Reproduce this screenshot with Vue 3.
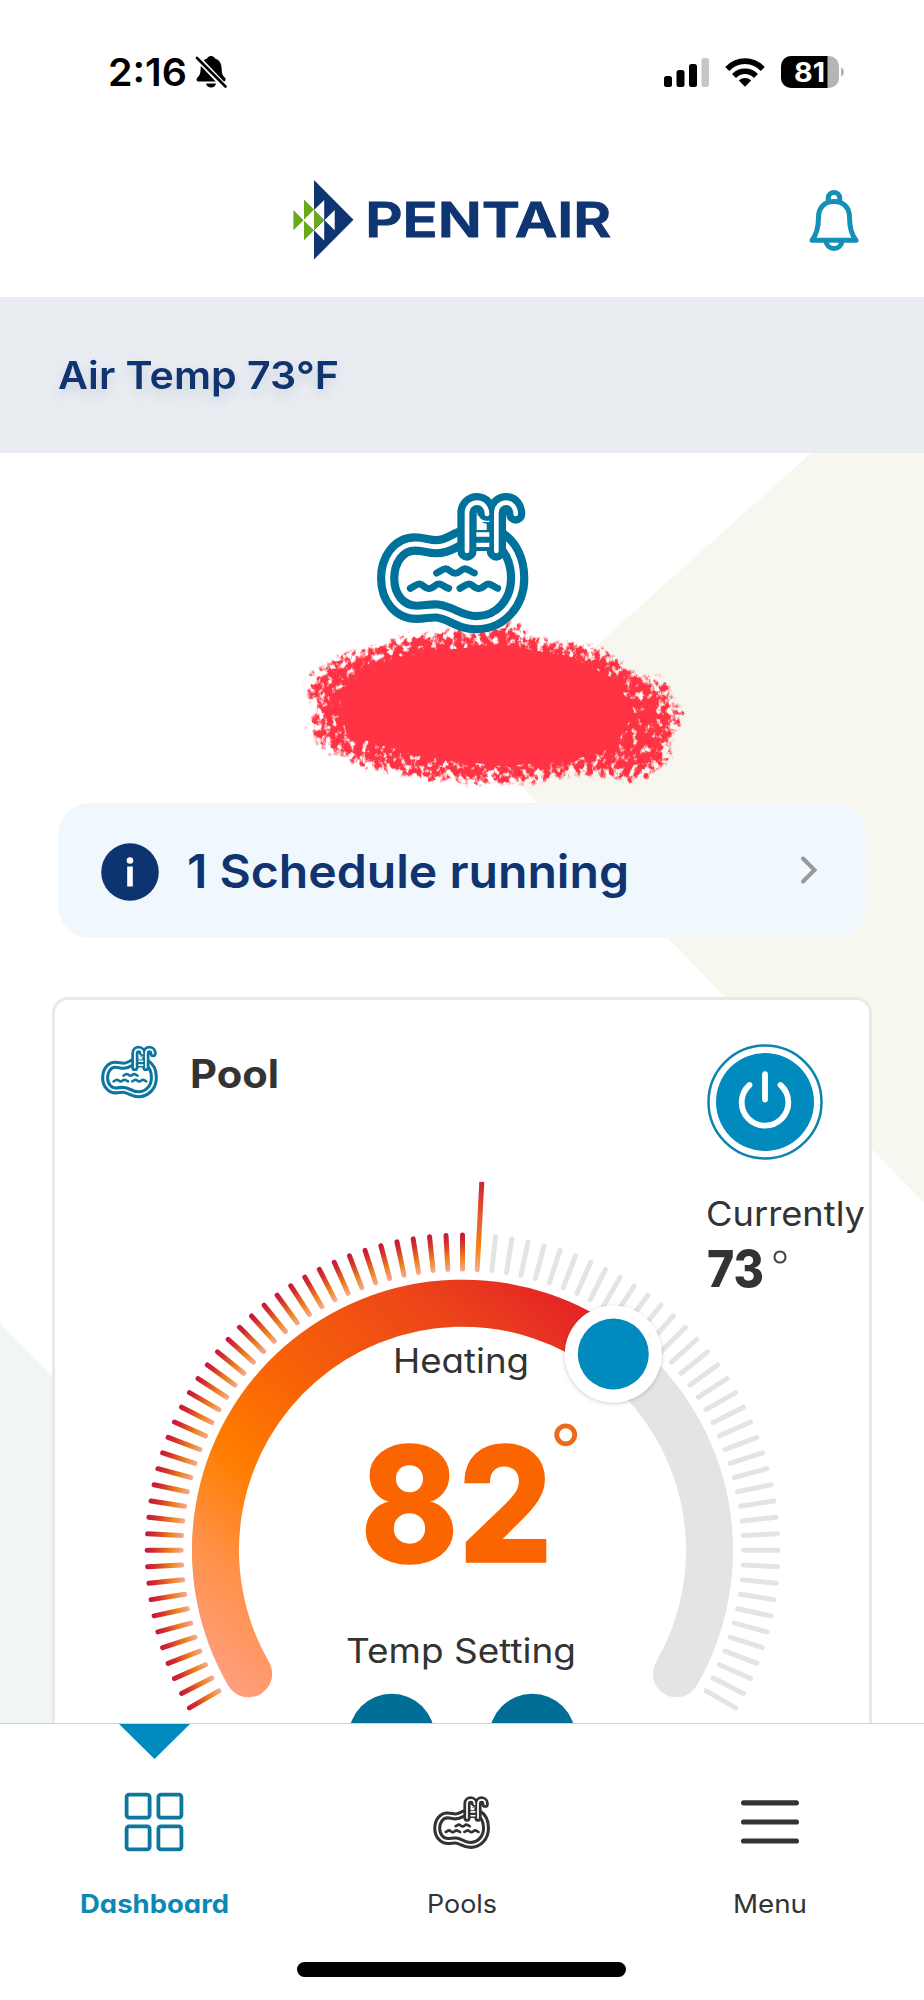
<script setup>
import { h } from 'vue'

// A single line of text whose box is exactly its cap height and whose width is fixed.
const Label = (props) =>
  h('svg', { class: 'label', width: props.w, height: Math.round(props.size * 0.727) }, [
    h('text', {
      x: 0,
      y: Math.round(props.size * 0.727),
      'font-size': props.size,
      'font-weight': props.weight,
      fill: 'currentColor',
      textLength: props.w,
      lengthAdjust: 'spacingAndGlyphs'
    }, props.text)
  ])
Label.props = ['text', 'w', 'size', 'weight']

const ticks = Array.from({ length: 81 }, (_, i) => -120 + i * 3)
  .filter((a) => a !== 3)
  .map((a) => ({ angle: a, hot: a < 3 }))
</script>

<template>
  <div class="screen">
    <svg class="defs" width="0" height="0">
      <symbol id="pool" viewBox="0 0 600 540">
        <path d="M345 200C315 206 300 230 258 230C235 230 220 222 195 222C145 222 113 270 113 325C113 385 150 427 200 427C225 427 240 421 262 423C308 429 325 458 380 458C450 458 503 400 503 325C503 270 480 225 445 205" fill="#fff" stroke="currentColor" stroke-width="64" />
        <path d="M345 200C315 206 300 230 258 230C235 230 220 222 195 222C145 222 113 270 113 325C113 385 150 427 200 427C225 427 240 421 262 423C308 429 325 458 380 458C450 458 503 400 503 325C503 270 480 225 445 205" fill="none" stroke="#fff" stroke-width="15" />
        <path d="M351 180H439V243H351Z" fill="currentColor" />
        <g fill="none" stroke-linecap="round">
          <path d="M351 243V130C351 110 365 98 381 98C399 98 411 113 411 132M439 243V130C439 110 453 98 468 98C486 98 497 113 497 132" stroke="currentColor" stroke-width="58" />
          <path d="M351 243V130C351 110 365 98 381 98C399 98 411 113 411 132M439 243V130C439 110 453 98 468 98C486 98 497 113 497 132" stroke="#fff" stroke-width="14" />
          <path d="M260 309C275 301 279 296 287 296C298 296 303 310 316 310C329 310 334 296 345 296C355 296 362 305 373 309M181 355C196 347 200 342 208 342C219 342 224 356 237 356C250 356 255 342 266 342C276 342 283 351 296 355M330 355C345 347 349 342 357 342C368 342 373 356 386 356C399 356 404 342 415 342C425 342 432 351 443 355" stroke="currentColor" stroke-width="21" />
        </g>
        <path d="M382 136V156H418V152C400 153 390 148 387 138ZM379 187H418V200H379ZM379 218H418V231H379Z" fill="#fff" />
      </symbol>
    </svg>

    <div class="status">
      <Label text="2:16" :w="79" :size="38.5" :weight="600" />
      <svg class="silent" width="32" height="34" viewBox="0 0 32 34">
        <path d="M16 1c2 0 3.500 1 4 2.600C25 5 26.500 9.500 26.700 14c.2 5 1 6.500 3 8.500 1.500 1.500 1 4-1 4H3.500c-2 0-2.500-2.500-1-4C5 20 5.500 18 5.600 14 6 8 8 5 12.200 3.600 12.600 2 14 1 16 1ZM11 28.500h10c-.5 2.500-2.500 4-5 4s-4.500-1.500-5-4Z" />
        <path d="M1 1.500 31 33" stroke="#fff" stroke-width="6" />
        <path d="M2 3 30.500 31.500" stroke="#000" stroke-width="2.600" stroke-linecap="round" />
      </svg>
      <svg class="signal" width="46" height="29" viewBox="0 0 46 29">
        <rect x="0" y="18" width="8" height="11" rx="2.500" />
        <rect x="12.500" y="12" width="8" height="17" rx="2.500" />
        <rect x="25" y="6" width="8" height="23" rx="2.500" />
        <rect x="37.500" y="0" width="7.500" height="29" rx="2.500" fill="#c6c6c6" />
      </svg>
      <svg class="wifi" width="40" height="29" viewBox="0 0 40 29">
        <g fill="none" stroke="#000" stroke-width="5.600">
          <path d="M2.300 11C12 .5 28 .5 37.700 11" />
          <path d="M9 17.900c6.300-6.200 15.700-6.200 22 0" />
        </g>
        <path d="M13.800 22.500c3.500-3.300 8.900-3.300 12.400 0L20 28.700Z" />
      </svg>
      <svg class="battery" width="64" height="32" viewBox="0 0 64 32">
        <clipPath id="cell"><rect width="58" height="32" rx="10" /></clipPath>
        <g clip-path="url(#cell)">
          <rect width="58" height="32" fill="#b5b5b5" />
          <rect width="46.500" height="32" />
        </g>
        <path d="M60 11.500c4 1.500 4 7.500 0 9Z" fill="#b5b5b5" />
        <text x="13" y="25.500" font-size="26.500" font-weight="700" fill="#fff" textLength="31" lengthAdjust="spacingAndGlyphs">81</text>
      </svg>
    </div>

    <header class="header">
      <svg class="brand" width="322" height="82" viewBox="0 0 322 82">
        <path d="M22 1 61.500 40.700 22 80.500Z" fill="#0f3572" />
        <path d="M32.200 21v20.200L22 31ZM32.200 41.200v20.200L22 51.200ZM42.700 31v20.200L32.500 41.200Z" fill="#fff" />
        <path d="M1.400 31v20.200l10.200-10ZM12 20.500v20.200L22 30.600ZM12 41.700v19.500l10-10ZM22 31v20.200l10.200-10Z" fill="#69a91b" />
        <text x="73.200" y="58.200" font-size="47.500" font-weight="600" fill="#0f3572" stroke="#0f3572" stroke-width="1" textLength="246" lengthAdjust="spacingAndGlyphs">PENTAIR</text>
      </svg>
      <svg class="bell" width="50" height="62" viewBox="0 0 50 62" fill="none" stroke="#138fb8" stroke-width="5" stroke-linejoin="round">
        <path d="M3 51.300C8 45 9.500 37 9.500 28C9.500 17.500 16.500 12.500 25 12.500S40.500 17.500 40.500 28C40.500 37 42 45 47 51.300Z" />
        <path d="M19.300 13V9C19.300 1.800 30.700 1.800 30.700 9V13M17 52C18 62 32 62 33 52" />
      </svg>
    </header>

    <section class="air">
      <Label text="Air Temp 73°F" :w="281" :size="38.5" :weight="600" />
    </section>

    <main class="content">
      <svg class="backdrop" width="924" height="1270" viewBox="0 453 924 1270">
        <path d="M811 453H924V1203L492 756Q483 747 492 739Z" fill="#f7f7ef" />
        <path d="M0 1323 60 1385V1723H0Z" fill="#f0f6f2" />
      </svg>

      <div class="hero">
        <svg class="scribble" width="440" height="190" viewBox="280 605 440 190">
          <filter id="crayon" x="-5%" y="-8%" width="110%" height="116%" color-interpolation-filters="sRGB">
            <feTurbulence type="fractalNoise" baseFrequency=".16 .13" numOctaves="4" seed="8" result="n" />
            <feColorMatrix in="n" values="0 0 0 0 1  0 0 0 0 .2  0 0 0 0 .26  1 0 0 0 0" result="grain" />
            <feTurbulence type="fractalNoise" baseFrequency=".05" numOctaves="2" seed="3" result="w" />
            <feDisplacementMap in="SourceGraphic" in2="w" scale="10" xChannelSelector="R" yChannelSelector="G" result="rough" />
            <feGaussianBlur in="rough" stdDeviation="11" result="soft" />
            <feComposite in="soft" in2="grain" operator="arithmetic" k2="1.1" k3="2.2" k4="-1.62" result="mix" />
            <feComponentTransfer in="mix" result="edge"><feFuncA type="linear" slope="2.3" intercept="0" /></feComponentTransfer>
            <feGaussianBlur in="rough" stdDeviation="1.5" result="outline" />
            <feComposite in="edge" in2="outline" operator="in" result="mask" />
            <feFlood flood-color="#ff3344" />
            <feComposite in2="mask" operator="in" />
          </filter>
          <path filter="url(#crayon)" d="M308 673 341 654 376 648 393 636 450 628 478 630 516 620 546 641 582 643 622 658 631 673 665 677 670 696 689 715 672 734 669 764 642 783 574 774 543 784 455 784 378 774 324 753 306 730 317 710 305 688Z" fill="#ff3344" />
          <path d="M343 695 372 669 420 657 500 648 570 661 612 682 630 712 612 744 570 757 500 762 420 752 350 732Z" fill="#ff3344" stroke="#ff3344" stroke-width="8" stroke-linejoin="round" />
        </svg>
        <svg class="hero-icon" width="200" height="180"><use href="#pool" /></svg>
      </div>

      <div class="schedule">
        <svg width="58" height="58" viewBox="0 0 58 58">
          <circle cx="29" cy="29" r="28.800" fill="#0d3470" />
          <circle cx="29" cy="17.500" r="3.300" fill="#fff" />
          <rect x="26.200" y="23.500" width="5.600" height="20" fill="#fff" />
        </svg>
        <Label text="1 Schedule running" :w="442" :size="46.5" :weight="600" />
        <svg class="chevron" width="18" height="30" viewBox="0 0 18 30">
          <path d="M3 3.500 14.500 15 3 26.500" fill="none" stroke="#999" stroke-width="4" stroke-linecap="round" />
        </svg>
      </div>

      <div class="card">
        <svg class="dial" width="814" height="723" viewBox="55 1000 814 723">
          <defs>
            <linearGradient id="tick" gradientUnits="userSpaceOnUse" x1="0" y1="-318" x2="0" y2="-279">
              <stop offset="0" stop-color="#c5163c" />
              <stop offset=".25" stop-color="#d32d30" />
              <stop offset=".65" stop-color="#ec801b" />
              <stop offset="1" stop-color="#f7ab98" />
            </linearGradient>
            <linearGradient id="needle" gradientUnits="userSpaceOnUse" x1="0" y1="-369" x2="0" y2="-279">
              <stop offset="0" stop-color="#cb2338" />
              <stop offset=".35" stop-color="#e4572a" />
              <stop offset=".75" stop-color="#f38518" />
              <stop offset="1" stop-color="#f9ad98" />
            </linearGradient>
            <linearGradient id="heat" gradientUnits="userSpaceOnUse" x1="230" y1="1690" x2="580" y2="1300">
              <stop offset="0" stop-color="#ff9e80" />
              <stop offset=".18" stop-color="#ff9045" />
              <stop offset=".33" stop-color="#ff7e00" />
              <stop offset=".5" stop-color="#f96506" />
              <stop offset=".8" stop-color="#ec4519" />
              <stop offset="1" stop-color="#e52228" />
            </linearGradient>
            <filter id="lift" x="-20%" y="-20%" width="140%" height="140%">
              <feDropShadow dx="0" dy="1" stdDeviation="2" flood-color="#000" flood-opacity=".22" />
            </filter>
          </defs>
          <g transform="translate(462.500 1550.300)">
            <path
              v-for="t in ticks"
              :key="t.angle"
              d="M-2.500-315.300a2.500 2.500 0 0 1 5 0v34a2.500 2.500 0 0 1-5 0z"
              :transform="`rotate(${t.angle})`"
              :fill="t.hot ? 'url(#tick)' : '#e4e4e4'"
            />
            <path d="M-2.500-369h5v88a2.500 2.500 0 0 1-5 0z" transform="rotate(3)" fill="url(#needle)" />
          </g>
          <path d="M248.600 1673.800A247 247 0 1 1 676.400 1673.800" fill="none" stroke="#e4e4e4" stroke-width="47" stroke-linecap="round" />
          <path d="M248.600 1673.800A247 247 0 0 1 612.900 1354.300" fill="none" stroke="url(#heat)" stroke-width="47" stroke-linecap="round" />
          <circle cx="613.300" cy="1354" r="48.500" fill="#fff" filter="url(#lift)" />
          <circle cx="613.300" cy="1354" r="35.500" fill="#008abd" />
          <g fill="#333" font-size="33.500">
            <text x="393" y="1372.700" textLength="136" lengthAdjust="spacingAndGlyphs">Heating</text>
            <text x="346" y="1663.300" textLength="230" lengthAdjust="spacingAndGlyphs">Temp Setting</text>
          </g>
          <text x="360.500" y="1562" font-size="160" font-weight="800" fill="#fb6500" stroke="#fb6500" stroke-width="1.500" textLength="192" lengthAdjust="spacingAndGlyphs">82</text>
          <circle cx="565.700" cy="1434.800" r="9" fill="none" stroke="#ec6a18" stroke-width="4.800" />
          <circle cx="391.700" cy="1736.700" r="43" fill="#006e96" />
          <circle cx="532.300" cy="1736.700" r="43" fill="#006e96" />
        </svg>
        <div class="card-head">
          <svg class="card-icon" width="75" height="67.500"><use href="#pool" /></svg>
          <Label class="card-title" text="Pool" :w="89" :size="39" :weight="700" />
          <div class="side">
            <svg width="116" height="116" viewBox="0 0 116 116" fill="none">
              <circle cx="58" cy="58" r="56.500" stroke="#0b83b0" stroke-width="2.500" />
              <circle cx="58" cy="58" r="49" fill="#008abd" />
              <path d="M42.500 41A23.300 23.300 0 1 0 73.500 41M58 30.200V55.500" stroke="#fff" stroke-width="5.800" stroke-linecap="round" />
            </svg>
            <Label class="now" text="Currently" :w="159" :size="34" :weight="400" />
            <div class="reading">
              <Label text="73" :w="57" :size="51.5" :weight="800" />
              <svg width="14" height="14" viewBox="0 0 14 14"><circle cx="7" cy="7" r="5.500" fill="none" stroke="#444" stroke-width="2.100" /></svg>
            </div>
          </div>
        </div>
      </div>
    </main>

    <nav class="tabs">
      <div class="tab active">
        <svg class="pointer" width="71" height="35" viewBox="0 0 71 35"><path d="M0 0H71L35.500 35Z" fill="#008abd" /></svg>
        <svg class="tab-icon" width="60" height="60" viewBox="0 0 60 60" fill="none" stroke="#0e779c" stroke-width="3.800">
          <rect x="2.600" y="2.600" width="23" height="23" rx="2.500" />
          <rect x="34.400" y="2.600" width="23" height="23" rx="2.500" />
          <rect x="2.600" y="34.400" width="23" height="23" rx="2.500" />
          <rect x="34.400" y="34.400" width="23" height="23" rx="2.500" />
        </svg>
        <Label text="Dashboard" :w="149" :size="25.5" :weight="700" />
      </div>
      <div class="tab">
        <svg class="tab-icon" width="74" height="60" viewBox="15 35 592 480"><use href="#pool" width="600" height="540" /></svg>
        <Label text="Pools" :w="70" :size="25.5" :weight="400" />
      </div>
      <div class="tab">
        <svg class="tab-icon" width="60" height="60" viewBox="0 0 60 60" stroke="#333" stroke-width="5.200" stroke-linecap="round">
          <path d="M3.600 10.800H56.400M3.600 30H56.400M3.600 49H56.400" />
        </svg>
        <Label text="Menu" :w="74" :size="25.5" :weight="400" />
      </div>
      <div class="home"></div>
    </nav>
  </div>
</template>

<style>
body {
  background: #fff;
}
</style>

<style scoped>
.screen {
  width: 924px;
  height: 2000px;
  display: flex;
  flex-direction: column;
  overflow: hidden;
  background: #fff;
  color: #333;
  font-family: Inter, "Liberation Sans", sans-serif;
  font-feature-settings: "cv11";
}
svg {
  display: block;
  flex: none;
}
.defs {
  position: absolute;
}
.label {
  overflow: visible;
}
.status {
  height: 144px;
  display: flex;
  align-items: center;
  padding: 0 79px 0 108px;
  box-sizing: border-box;
  color: #000;
}
.silent {
  margin-left: 8px;
}
.signal {
  margin-left: auto;
}
.wifi {
  margin-left: 15px;
}
.battery {
  margin-left: 16px;
}
.header {
  height: 153px;
  display: flex;
  align-items: center;
  padding-left: 292px;
}
.brand {
  margin-top: -2px;
}
.bell {
  margin: -2px 0 0 195px;
}
.air {
  height: 156px;
  display: flex;
  align-items: center;
  padding-left: 58px;
  background: #e9ecf1;
  color: #0f3470;
}
.air .label {
  filter: drop-shadow(0 6px 6px rgba(15, 52, 112, 0.13));
}
.content {
  position: relative;
  height: 1270px;
  overflow: hidden;
}
.backdrop {
  position: absolute;
  inset: 0;
}
.hero {
  position: relative;
  height: 350px;
  padding: 17px 0 0 350px;
  box-sizing: border-box;
}
.scribble {
  position: absolute;
  left: 280px;
  top: 152px;
}
.hero-icon {
  position: relative;
  color: #00719a;
}
.schedule {
  position: relative;
  height: 135px;
  margin: 0 58px;
  padding: 0 48px 0 43px;
  box-sizing: border-box;
  display: flex;
  align-items: center;
  gap: 28px;
  border-radius: 32px;
  background: #f0f7fd;
  color: #0f3470;
}
.schedule > svg:first-child {
  margin-top: 3px;
}
.chevron {
  margin: -2px 0 0 auto;
}
.card {
  position: relative;
  display: grid;
  height: 800px;
  margin: 59px 52px 0;
  border: 3px solid #e9e9e9;
  border-radius: 16px;
  box-sizing: border-box;
  background: #fff;
}
.dial,
.card-head {
  grid-area: 1 / 1;
}
.card-head {
  display: flex;
  align-items: flex-start;
  padding: 36px 0 0 36px;
}
.card-icon {
  margin-top: 1px;
  color: #0e769e;
}
.card-title {
  margin: 24px 0 0 24px;
}
.side {
  margin-left: 428px;
  margin-top: 8px;
}
.now {
  margin: 41px 0 0 -1px;
}
.reading {
  display: flex;
  margin-top: 24px;
  gap: 9px;
}
.tabs {
  position: relative;
  height: 277px;
  display: grid;
  grid-template-columns: repeat(3, 1fr);
  box-sizing: border-box;
  border-top: 1px solid #d2d2d2;
  background: #fff;
}
.tab {
  position: relative;
  display: flex;
  flex-direction: column;
  align-items: center;
}
.tab-icon {
  margin: 68px 0 42px;
}
.active {
  color: #0c88b4;
}
.pointer {
  position: absolute;
  left: 119px;
  top: 0;
}
.home {
  position: absolute;
  left: 297px;
  bottom: 23px;
  width: 329px;
  height: 15px;
  border-radius: 8px;
  background: #000;
}
</style>
